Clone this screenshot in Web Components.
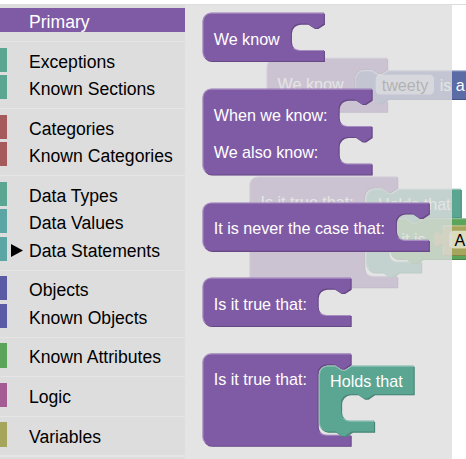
<!DOCTYPE html>
<html lang="en">
<head>
<meta charset="utf-8">
<title>Blocks editor</title>
<style>
html,body{margin:0;background:#fff;font-family:"Liberation Sans",Arial,sans-serif}
</style>
</head>
<body>
<block-editor>
  <tool-box slot="toolbox">
    <tool-row color="#805ba5" selected>Primary</tool-row>
    <tool-sep></tool-sep>
    <tool-row color="#5ba593">Exceptions</tool-row>
    <tool-row color="#5ba593">Known Sections</tool-row>
    <tool-sep></tool-sep>
    <tool-row color="#a55b5b">Categories</tool-row>
    <tool-row color="#a55b5b">Known Categories</tool-row>
    <tool-sep></tool-sep>
    <tool-row color="#5ba593">Data Types</tool-row>
    <tool-row color="#5ba5a5">Data Values</tool-row>
    <tool-row color="#5ba5a5" closed>Data Statements</tool-row>
    <tool-sep></tool-sep>
    <tool-row color="#5b5ba5">Objects</tool-row>
    <tool-row color="#5b5ba5">Known Objects</tool-row>
    <tool-sep></tool-sep>
    <tool-row color="#5ba55b">Known Attributes</tool-row>
    <tool-sep></tool-sep>
    <tool-row color="#a55b93">Logic</tool-row>
    <tool-sep></tool-sep>
    <tool-row color="#a5a55b">Variables</tool-row>
    <tool-sep></tool-sep>
  </tool-box>

  <code-block slot="workspace" x="266.6" y="57.8" w="109.5" h="49" color="#805ba5" inputs="10,29" labels="We know|10|29"></code-block>
  <code-block slot="workspace" x="355" y="70.4" w="130" h="26" color="#5b6ba5" stack fields="18.8,4,53,18" labels="tweety|24.3|18.3|dark;is|77|18.3;a|91.5|18.3"></code-block>
  <code-block slot="workspace" x="249.3" y="176.5" w="134.4" h="100.5" color="#805ba5" inputs="10,80.5" labels="Is it true that:|10.2|28.5"></code-block>
  <code-block slot="workspace" x="365.9" y="188.8" w="86.2" h="76" color="#5ba593" stack inputs="26,40" labels="Holds that|11|19.1"></code-block>
  <code-block slot="workspace" x="389.4" y="218.2" w="130" h="37" color="#5ba55b" stack labels="it is|11|24.6"></code-block>
  <code-block slot="workspace" x="442.7" y="225.3" w="60" h="27" color="#a5a55b" tab fields="6,5,30,16" labels="A|10.8|18.5|dark"></code-block>

  <code-block slot="flyout" x="202.4" y="12.6" w="110.4" h="44" color="#805ba5" inputs="10,24" labels="We know|10.3|29.7"></code-block>
  <code-block slot="flyout" x="202.4" y="88.6" w="153.8" h="78" color="#805ba5" inputs="10,24;44,24" labels="When we know:|10.3|29.7;We also know:|10.3|63"></code-block>
  <code-block slot="flyout" x="202.4" y="202.4" w="205.8" h="44" color="#805ba5" inputs="10,24" labels="It is never the case that:|10.3|28.9"></code-block>
  <code-block slot="flyout" x="202.4" y="277.6" w="134.7" h="44" color="#805ba5" inputs="10,24" labels="Is it true that:|10.3|29.2"></code-block>
  <code-block slot="flyout" x="202.4" y="353.3" w="134.7" h="84" color="#805ba5" inputs="10,64" labels="Is it true that:|10.3|29"></code-block>
  <code-block slot="flyout" x="318.8" y="365.6" w="86.2" h="60" color="#5ba593" stack inputs="26,24" labels="Holds that|10.2|19.3"></code-block>
</block-editor>

<script>
const attach = (el, html) => { el.attachShadow({mode:'open'}).innerHTML = html; };

customElements.define('block-editor', class extends HTMLElement {
  constructor(){ super(); attach(this, `<style>
    :host{display:block;position:relative;width:466px;height:459px;overflow:hidden;background:#fff}
    .layer{position:absolute;inset:0}
    .pane{position:absolute;left:185px;top:4px;width:267px;bottom:0;background:#ddd;opacity:.8}
    .edge{position:absolute;left:0;right:0;top:4px;height:1px;background:#ddd}
    .tools{position:absolute;left:0;top:4px;bottom:0;width:185px}
    </style><div class="edge"></div>
    <div class="layer"><slot name="workspace"></slot></div>
    <div class="pane"></div>
    <div class="layer"><slot name="flyout"></slot></div>
    <div class="tools"><slot name="toolbox"></slot></div>`); }
});

customElements.define('tool-box', class extends HTMLElement {
  constructor(){ super(); attach(this, `<style>
    :host{display:flex;flex-direction:column;box-sizing:border-box;height:100%;padding-top:4px;background:#ddd;overflow:hidden}
    </style><slot></slot>`); }
});

customElements.define('tool-row', class extends HTMLElement {
  constructor(){ super(); attach(this, `<style>
    :host{display:flex;align-items:center;flex:none;box-sizing:border-box;height:24.2px;margin-bottom:3.3px;
      border-left:7px solid var(--c);font-size:17.6px;line-height:24.2px;white-space:nowrap;color:#000}
    :host([selected]){background:var(--c);color:#fff}
    i{width:22px;height:13px;flex:none;display:flex;margin-top:3px}
    svg{margin-left:4px;display:none}
    :host([closed]) svg{display:block}
    span{position:relative;top:2.15px}
    </style><i><svg width="12" height="13"><path d="M0 0L12 6.5L0 13z"/></svg></i><span><slot></slot></span>`); }
  connectedCallback(){ this.style.setProperty('--c', this.getAttribute('color')); }
});

customElements.define('tool-sep', class extends HTMLElement {
  constructor(){ super(); attach(this, `<style>
    :host{display:block;flex:none;height:1.1px;margin:5.5px 0;background:#e5e5e5}</style>`); }
});

/* A puzzle block; geometry is in block units, drawn at the editor's zoom of 1.1. */
customElements.define('code-block', class extends HTMLElement {
  connectedCallback(){
    const get = n => this.getAttribute(n) || '';
    const list = n => get(n) ? get(n).split(';') : [];
    const w = +get('w'), h = +get('h'), stack = this.hasAttribute('stack'), tab = this.hasAttribute('tab');
    const inputs = list('inputs').map(s => s.split(',').map(Number));
    const left = stack ? 20.2 : w - 30, lip = left + 30;
    const top = stack ? 'H15 l6,4 3,0 6,-4 ' : '';
    let d = tab ? 'M0,0 ' : 'M0,8 A8,8 0 0 1 8,0 ' + top;
    d += `H${w} `;
    let hi = '';
    for (const [y, ih] of inputs) {
      d += `V${y} H${lip} l-6,4 -3,0 -6,-4 h-7 a8,8 0 0 0 -8,8 v${ih-16} a8,8 0 0 0 8,8 H${lip} `;
      hi += `M${left+2.1},${y+ih-2} A8.5,8.5 0 0 0 ${left+8},${y+ih+.5} H${lip-.5} `;
    }
    d += `V${h} `;
    if (stack) d += 'H30 l-6,4 -3,0 -6,-4 ';
    if (tab) {
      d += 'H0 V20 c0,-10 -8,8 -8,-7.5 s8,2.5 8,-7.5 z';
      hi += `M.5,${h-.5} V19 M.5,4.5 V.5 H${w}`;
    } else {
      d += `H8 a8,8 0 0 1 -8,-8 z`;
      hi += `M2.7,${h-2.7} A7.5,7.5 0 0 1 .5,${h-8} V8 A7.5,7.5 0 0 1 8,.5 ${top}H${w-.5}`;
    }
    const rects = list('fields').map(s => { const [a,b,c,e] = s.split(',');
      return `<rect x="${a}" y="${b}" width="${c}" height="${e}" rx="4" fill="#fff" fill-opacity=".6"/>`; }).join('');
    const texts = list('labels').map(s => { const [t,x,y,k] = s.split('|');
      return `<text x="${x}" y="${y}" fill="${k ? '#000' : '#fff'}">${t}</text>`; }).join('');
    attach(this, `<style>
      :host{position:absolute;left:0;top:0;width:0;height:0}
      svg{display:block;overflow:visible}
      text{font:14.67px "Liberation Sans",Arial,sans-serif}
      </style><svg width="1" height="1"><g transform="translate(${get('x')},${get('y')}) scale(1.1)">
      <path d="${d}" transform="translate(1,1)" fill="${get('color')}"/>
      <path d="${d}" transform="translate(1,1)" fill="#000" fill-opacity=".2"/>
      <path d="${d}" fill="${get('color')}"/>
      <path d="${hi}" fill="none" stroke="#fff" stroke-opacity=".3"/>
      ${rects}${texts}</g></svg>`);
  }
});
</script>
</body>
</html>
